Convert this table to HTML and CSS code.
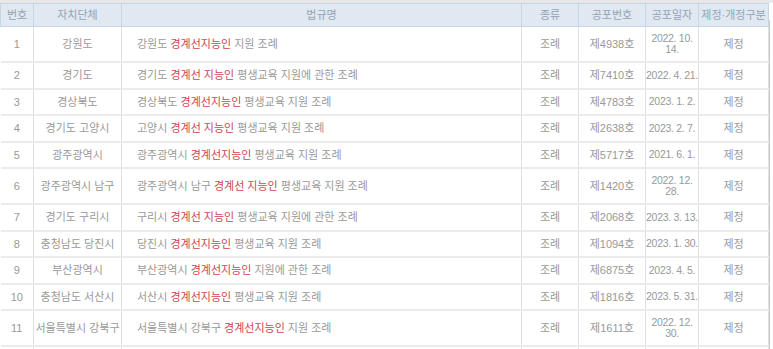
FILE: index.html
```html
<!DOCTYPE html>
<html lang="ko">
<head>
<meta charset="utf-8">
<title>경계선지능인 조례 목록</title>
<link rel="stylesheet" href="styles.css">
</head>
<body>
<div class="page">
  <div class="wrap">
    <table class="laws">
      <colgroup>
        <col class="c-no"><col class="c-org"><col class="c-title"><col class="c-kind"><col class="c-num"><col class="c-date"><col class="c-type">
      </colgroup>
      <thead>
        <tr><th>번호</th><th>자치단체</th><th>법규명</th><th>종류</th><th>공포번호</th><th>공포일자</th><th>제정·개정구분</th></tr>
      </thead>
      <tbody>
        <tr><td>1</td><td class="org">강원도</td><td class="title">강원도 <span class="hl">경계선지능인</span> 지원 조례</td><td>조례</td><td>제4938호</td><td class="date">2022. 10. 14.</td><td>제정</td></tr>
        <tr><td>2</td><td class="org">경기도</td><td class="title">경기도 <span class="hl">경계선 지능인</span> 평생교육 지원에 관한 조례</td><td>조례</td><td>제7410호</td><td class="date">2022. 4. 21.</td><td>제정</td></tr>
        <tr><td>3</td><td class="org">경상북도</td><td class="title">경상북도 <span class="hl">경계선지능인</span> 평생교육 지원 조례</td><td>조례</td><td>제4783호</td><td class="date">2023. 1. 2.</td><td>제정</td></tr>
        <tr><td>4</td><td class="org">경기도 고양시</td><td class="title">고양시 <span class="hl">경계선 지능인</span> 평생교육 지원 조례</td><td>조례</td><td>제2638호</td><td class="date">2023. 2. 7.</td><td>제정</td></tr>
        <tr><td>5</td><td class="org">광주광역시</td><td class="title">광주광역시 <span class="hl">경계선지능인</span> 평생교육 지원 조례</td><td>조례</td><td>제5717호</td><td class="date">2021. 6. 1.</td><td>제정</td></tr>
        <tr><td>6</td><td class="org">광주광역시 남구</td><td class="title">광주광역시 남구 <span class="hl">경계선 지능인</span> 평생교육 지원 조례</td><td>조례</td><td>제1420호</td><td class="date">2022. 12. 28.</td><td>제정</td></tr>
        <tr><td>7</td><td class="org">경기도 구리시</td><td class="title">구리시 <span class="hl">경계선 지능인</span> 평생교육 지원에 관한 조례</td><td>조례</td><td>제2068호</td><td class="date">2023. 3. 13.</td><td>제정</td></tr>
        <tr><td>8</td><td class="org">충청남도 당진시</td><td class="title">당진시 <span class="hl">경계선지능인</span> 평생교육 지원 조례</td><td>조례</td><td>제1094호</td><td class="date">2023. 1. 30.</td><td>제정</td></tr>
        <tr><td>9</td><td class="org">부산광역시</td><td class="title">부산광역시 <span class="hl">경계선지능인</span> 지원에 관한 조례</td><td>조례</td><td>제6875호</td><td class="date">2023. 4. 5.</td><td>제정</td></tr>
        <tr><td>10</td><td class="org">충청남도 서산시</td><td class="title">서산시 <span class="hl">경계선지능인</span> 평생교육 지원 조례</td><td>조례</td><td>제1816호</td><td class="date">2023. 5. 31.</td><td>제정</td></tr>
        <tr><td>11</td><td class="org">서울특별시 강북구</td><td class="title">서울특별시 강북구 <span class="hl">경계선지능인</span> 지원 조례</td><td>조례</td><td>제1611호</td><td class="date">2022. 12. 30.</td><td>제정</td></tr>
        <tr class="empty"><td></td><td></td><td></td><td></td><td></td><td></td><td></td></tr>
      </tbody>
    </table>
  </div>
  <div class="rail"></div>
</div>
</body>
</html>
```
FILE: styles.css
```css
html, body {
  margin: 0;
  padding: 0;
  background: #ffffff;
}

body {
  font-family: "Liberation Sans", "Noto Sans CJK KR", sans-serif;
  overflow: hidden;
  height: 349px;
}

.page {
  display: flex;
  border-top: 3px solid #e7e7e7;
}

.wrap {
  flex: none;
  width: 768px;
}

.rail {
  flex: 1;
  margin-top: 17px;
  margin-left: 1px;
  border-left: 1px solid #c9c9c9;
}

.laws {
  width: 768px;
  table-layout: fixed;
  border-collapse: collapse;
  font-size: 11px;
  letter-spacing: 0;
  color: #999999;
}

.c-no { width: 33px; }
.c-org { width: 88px; }
.c-title { width: 400px; }
.c-kind { width: 57px; }
.c-num { width: 67px; }
.c-date { width: 53px; }
.c-type { width: 70px; }

.laws th {
  height: 22px;
  padding: 0;
  background: #e0e8f1;
  border: 1px solid #c7d6e5;
  color: #95a3b6;
  font-weight: normal;
  line-height: 14px;
  white-space: nowrap;
  letter-spacing: 0;
}

.laws td {
  padding: 6px 0;
  line-height: 12.5px;
  text-align: center;
  vertical-align: middle;
  border-right: 1px solid #e0e0e0;
  border-bottom: 2px solid #ebebeb;
}

.laws td.org {
  white-space: nowrap;
}

.laws td.title {
  text-align: left;
  padding-left: 15px;
  white-space: nowrap;
}

.laws td.date {
  font-size: 10.5px;
  letter-spacing: -0.3px;
  line-height: 11px;
}

.hl {
  color: #cf4452;
}

.laws tr.empty td {
  height: 20px;
}
```
